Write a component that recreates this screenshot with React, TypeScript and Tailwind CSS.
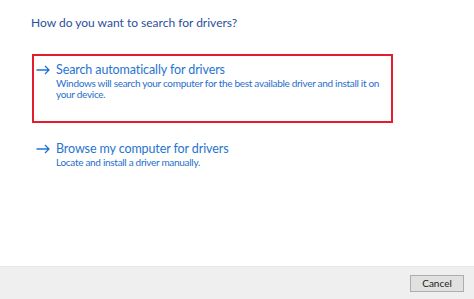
import React from "react";

function Arrow() {
  return (
    <svg width="14" height="10" viewBox="0 0 14 10" fill="none" className="shrink-0">
      <path d="M0.5 5H13M9 1L13 5L9 9" stroke="#1f74cf" strokeWidth="1.3" />
    </svg>
  );
}

export default function App() {
  return (
    <div className="w-[474px] h-[299px] bg-white flex flex-col" style={{ fontFamily: 'Lato, "Open Sans", sans-serif' }}>
      <div className="flex-1 flex flex-col pl-[32px] pr-[81px]">
        <div className="pt-[15px] -ml-[1px] text-[12px] leading-[16px] text-[#2a4f9c]">How do you want to search for drivers?</div>
        <div className="mt-[23px] border-2 border-[#e61b2c] h-[69px] flex flex-col pl-[2px] pt-[6px]">
          <div className="flex items-center gap-[6px]">
            <Arrow />
            <span className="text-[12.5px] tracking-[-0.1px] leading-[16px] text-[#1f74cf]">Search automatically for drivers</span>
          </div>
          <div className="pl-[20px] text-[10px] tracking-[-0.3px] leading-[11px] text-[#1f6fc9]">
            Windows will search your computer for the best available driver and install it on your device.
          </div>
        </div>
        <div className="mt-[18px] flex flex-col pl-[4px]">
          <div className="flex items-center gap-[6px]">
            <Arrow />
            <span className="text-[12.5px] tracking-[-0.1px] leading-[16px] text-[#1f74cf]">Browse my computer for drivers</span>
          </div>
          <div className="pl-[20px] text-[10px] tracking-[-0.3px] leading-[11px] text-[#1f6fc9]">Locate and install a driver manually.</div>
        </div>
      </div>
      <div className="h-[33px] bg-[#efefef] border-t border-[#e6e6e6] flex items-center justify-end pr-[10px]">
        <button className="w-[54px] h-[17px] bg-[#e1e1e1] border border-[#adadad] text-[10px] leading-[15px] text-[#1a1a1a]">Cancel</button>
      </div>
    </div>
  );
}
